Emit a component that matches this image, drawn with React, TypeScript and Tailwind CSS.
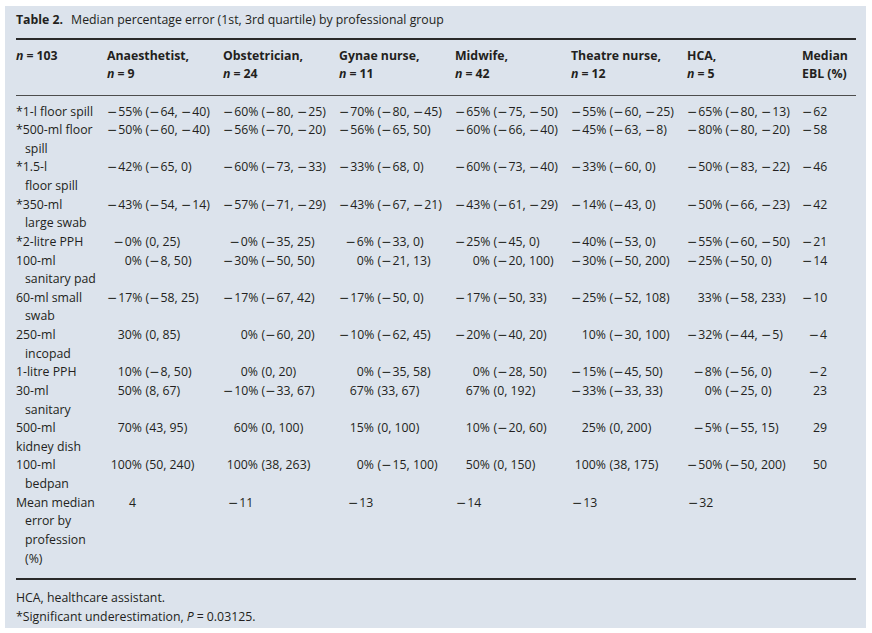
import React from "react";

const cols = "grid grid-cols-[91px_116px_116px_116px_116px_116px_115px_54px]";

function fmt(s: string) {
  const parts = s.split("\u2212");
  const out: React.ReactNode[] = [];
  parts.forEach((p, i) => {
    if (i > 0)
      out.push(
        <span key={"m" + i} className="mr-[1px] font-['DejaVu_Sans',sans-serif]">
          {"\u2212"}
        </span>
      );
    if (p) out.push(<span key={"t" + i}>{p}</span>);
  });
  return out;
}

function Cell({ v }: { v: string }) {
  const i = v.indexOf(" ");
  const pct = v.slice(0, i);
  const rest = v.slice(i + 1);
  return (
    <div className="flex whitespace-nowrap">
      <span className="w-[35px] shrink-0 text-right">{fmt(pct)}</span>
      <span className="ml-[3.5px]">{fmt(rest)}</span>
    </div>
  );
}

type Row = { label: string[]; indent: boolean; vals: string[]; ebl: string };

const rows: Row[] = [
  { label: ["*1-l floor spill"], indent: true, vals: ["−55% (−64, −40)", "−60% (−80, −25)", "−70% (−80, −45)", "−65% (−75, −50)", "−55% (−60, −25)", "−65% (−80, −13)"], ebl: "−62" },
  { label: ["*500-ml floor", "spill"], indent: true, vals: ["−50% (−60, −40)", "−56% (−70, −20)", "−56% (−65, 50)", "−60% (−66, −40)", "−45% (−63, −8)", "−80% (−80, −20)"], ebl: "−58" },
  { label: ["*1.5-l", "floor spill"], indent: true, vals: ["−42% (−65, 0)", "−60% (−73, −33)", "−33% (−68, 0)", "−60% (−73, −40)", "−33% (−60, 0)", "−50% (−83, −22)"], ebl: "−46" },
  { label: ["*350-ml", "large swab"], indent: true, vals: ["−43% (−54, −14)", "−57% (−71, −29)", "−43% (−67, −21)", "−43% (−61, −29)", "−14% (−43, 0)", "−50% (−66, −23)"], ebl: "−42" },
  { label: ["*2-litre PPH"], indent: true, vals: ["−0% (0, 25)", "−0% (−35, 25)", "−6% (−33, 0)", "−25% (−45, 0)", "−40% (−53, 0)", "−55% (−60, −50)"], ebl: "−21" },
  { label: ["100-ml", "sanitary pad"], indent: true, vals: ["0% (−8, 50)", "−30% (−50, 50)", "0% (−21, 13)", "0% (−20, 100)", "−30% (−50, 200)", "−25% (−50, 0)"], ebl: "−14" },
  { label: ["60-ml small", "swab"], indent: true, vals: ["−17% (−58, 25)", "−17% (−67, 42)", "−17% (−50, 0)", "−17% (−50, 33)", "−25% (−52, 108)", "33% (−58, 233)"], ebl: "−10" },
  { label: ["250-ml", "incopad"], indent: true, vals: ["30% (0, 85)", "0% (−60, 20)", "−10% (−62, 45)", "−20% (−40, 20)", "10% (−30, 100)", "−32% (−44, −5)"], ebl: "−4" },
  { label: ["1-litre PPH"], indent: true, vals: ["10% (−8, 50)", "0% (0, 20)", "0% (−35, 58)", "0% (−28, 50)", "−15% (−45, 50)", "−8% (−56, 0)"], ebl: "−2" },
  { label: ["30-ml", "sanitary"], indent: true, vals: ["50% (8, 67)", "−10% (−33, 67)", "67% (33, 67)", "67% (0, 192)", "−33% (−33, 33)", "0% (−25, 0)"], ebl: "23" },
  { label: ["500-ml", "kidney dish"], indent: false, vals: ["70% (43, 95)", "60% (0, 100)", "15% (0, 100)", "10% (−20, 60)", "25% (0, 200)", "−5% (−55, 15)"], ebl: "29" },
  { label: ["100-ml", "bedpan"], indent: true, vals: ["100% (50, 240)", "100% (38, 263)", "0% (−15, 100)", "50% (0, 150)", "100% (38, 175)", "−50% (−50, 200)"], ebl: "50" },
];

const headers: [string, string][] = [
  ["Anaesthetist,", "9"],
  ["Obstetrician,", "24"],
  ["Gynae nurse,", "11"],
  ["Midwife,", "42"],
  ["Theatre nurse,", "12"],
  ["HCA,", "5"],
];

function Label({ lines, indent }: { lines: string[]; indent: boolean }) {
  return (
    <div className="whitespace-nowrap">
      {lines.map((l, i) => (
        <div key={i} className={i > 0 && indent ? "pl-[9px]" : ""}>
          {l}
        </div>
      ))}
    </div>
  );
}

function NEq({ n }: { n: string }) {
  return (
    <div className="whitespace-nowrap">
      <i>n</i>
      <span className="mx-[3px]">=</span>
      {n}
    </div>
  );
}

export default function App() {
  return (
    <div className="min-h-screen bg-white pl-[5px] pt-[6px]">
      <div className="h-[622px] w-[861px] bg-[#dce3ec] pl-[11px] pr-[10px] pt-[5px] font-['Open_Sans',sans-serif] text-[12.3px] text-[#231f20]">
        <div className="leading-[18px] whitespace-nowrap">
          <span className="font-bold">Table 2.</span>
          <span className="ml-[8px]">Median percentage error (1st, 3rd quartile) by professional group</span>
        </div>
        <div className="mt-[9px] h-[2px] bg-[#2a2a2a]" />
        <div className={cols + " pb-[12.5px] pt-[6.5px] font-bold leading-[18px]"}>
          <NEq n="103" />
          {headers.map(([h, n]) => (
            <div key={h} className="whitespace-nowrap">
              <div>{h}</div>
              <NEq n={n} />
            </div>
          ))}
          <div>
            <div>Median</div>
            <div>EBL (%)</div>
          </div>
        </div>
        <div className="h-px bg-[#4d4d4d]" />
        <div className={cols + " items-start pt-[6.5px] leading-[18.62px]"}>
          {rows.map((r, ri) => (
            <React.Fragment key={ri}>
              <Label lines={r.label} indent={r.indent} />
              {r.vals.map((v, ci) => (
                <Cell key={ci} v={v} />
              ))}
              <div className="w-[25px] text-right whitespace-nowrap">{fmt(r.ebl)}</div>
            </React.Fragment>
          ))}
          <Label lines={["Mean median", "error by", "profession", "(%)"]} indent={true} />
          <div className="pl-[22px]">4</div>
          <div className="pl-[5px]">{fmt("−11")}</div>
          <div className="pl-[9px]">{fmt("−13")}</div>
          <div className="pl-[1px]">{fmt("−14")}</div>
          <div className="pl-[1px]">{fmt("−13")}</div>
          <div className="pl-[1px]">{fmt("−32")}</div>
          <div />
        </div>
        <div className="mt-[10px] h-[2px] bg-[#2a2a2a]" />
        <div className="pt-[9px] leading-[18.5px]">
          <div>HCA, healthcare assistant.</div>
          <div className="whitespace-nowrap">
            *Significant underestimation, <i>P</i>
            <span className="mx-[3px]">=</span>0.03125.
          </div>
        </div>
      </div>
    </div>
  );
}
